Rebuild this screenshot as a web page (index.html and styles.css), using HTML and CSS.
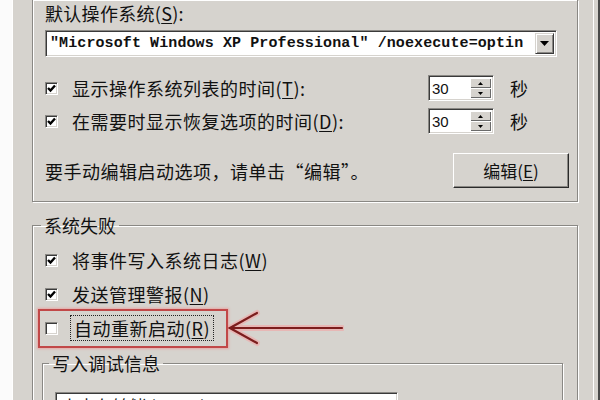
FILE: index.html
```html
<!DOCTYPE html>
<html lang="zh-CN">
<head>
    <meta charset="UTF-8">
    <title>启动和故障恢复</title>
    <link rel="stylesheet" href="styles.css">
</head>
<body>
    <div class="window">
        <div class="gutter"></div>

        <div class="tab">
            <!-- 系统启动 (top cut off) -->
            <div class="group group-boot">
                <div class="caption">默认操作系统(<u>S</u>):</div>

                <div class="combo combo-os">
                    <span class="combo-text">"Microsoft Windows XP Professional" /noexecute=optin</span>
                    <span class="combo-btn">
                        <svg width="9" height="5" viewBox="0 0 9 5"><path d="M0 0H9L4.5 5Z" fill="#000"/></svg>
                    </span>
                </div>

                <div class="row row-first">
                    <span class="check checked"><svg width="9" height="9" viewBox="0 0 9 9"><path d="M1 4L3.5 6.5L8 1.5" fill="none" stroke="#000" stroke-width="2.4"/></svg></span>
                    <span class="label">显示操作系统列表的时间(<u>T</u>):</span>
                    <span class="spin">
                        <span class="spin-text">30</span>
                        <span class="spin-btns">
                            <span class="spin-btn"><svg width="5" height="3" viewBox="0 0 5 3"><path d="M0 3H5L2.5 0Z" fill="#000"/></svg></span>
                            <span class="spin-btn"><svg width="5" height="3" viewBox="0 0 5 3"><path d="M0 0H5L2.5 3Z" fill="#000"/></svg></span>
                        </span>
                    </span>
                    <span class="unit">秒</span>
                </div>

                <div class="row row-second">
                    <span class="check checked"><svg width="9" height="9" viewBox="0 0 9 9"><path d="M1 4L3.5 6.5L8 1.5" fill="none" stroke="#000" stroke-width="2.4"/></svg></span>
                    <span class="label">在需要时显示恢复选项的时间(<u>D</u>):</span>
                    <span class="spin">
                        <span class="spin-text">30</span>
                        <span class="spin-btns">
                            <span class="spin-btn"><svg width="5" height="3" viewBox="0 0 5 3"><path d="M0 3H5L2.5 0Z" fill="#000"/></svg></span>
                            <span class="spin-btn"><svg width="5" height="3" viewBox="0 0 5 3"><path d="M0 0H5L2.5 3Z" fill="#000"/></svg></span>
                        </span>
                    </span>
                    <span class="unit">秒</span>
                </div>

                <div class="edit-row">
                    <span class="label">要手动编辑启动选项，请单击“编辑”。</span>
                    <span class="button">编辑(<u>E</u>)</span>
                </div>
            </div>

            <!-- 系统失败 -->
            <fieldset class="group group-fail">
                <legend>系统失败</legend>

                <div class="row row-event">
                    <span class="check checked"><svg width="9" height="9" viewBox="0 0 9 9"><path d="M1 4L3.5 6.5L8 1.5" fill="none" stroke="#000" stroke-width="2.4"/></svg></span>
                    <span class="label">将事件写入系统日志(<u>W</u>)</span>
                </div>

                <div class="row row-alert">
                    <span class="check checked"><svg width="9" height="9" viewBox="0 0 9 9"><path d="M1 4L3.5 6.5L8 1.5" fill="none" stroke="#000" stroke-width="2.4"/></svg></span>
                    <span class="label">发送管理警报(<u>N</u>)</span>
                </div>

                <div class="marked">
                    <div class="highlight">
                        <div class="row">
                            <span class="check"></span>
                            <span class="label focus">自动重新启动(<u>R</u>)</span>
                        </div>
                    </div>
                    <svg class="arrow" width="116" height="39" viewBox="0 0 116 39">
                        <g fill="none" stroke="#f3a6a6" stroke-width="6" stroke-linecap="round" opacity="0.6">
                            <path d="M2 19H114"/>
                            <path d="M29 4L2 19L29 34"/>
                        </g>
                        <g fill="none" stroke="#7c1d1d" stroke-width="2.2" stroke-linecap="round">
                            <path d="M2 19H114"/>
                            <path d="M29 4L2 19L29 34"/>
                        </g>
                    </svg>
                </div>

                <fieldset class="group group-debug">
                    <legend>写入调试信息</legend>
                    <div class="combo combo-dump">
                        <span class="dump-text">小内存转储 (64 KB)</span>
                    </div>
                </fieldset>
            </fieldset>
        </div>
    </div>
</body>
</html>
```

FILE: styles.css
```css
/* General */
body {
    margin: 0;
    width: 600px;
    height: 400px;
    overflow: hidden;
    background: #fbfbfb;
    font-family: "Noto Sans CJK SC", "Liberation Sans", sans-serif;
    font-size: 18px;
    color: #111;
}

u {
    text-underline-offset: 2px;
}

.window {
    display: flex;
    height: 400px;
    overflow: hidden;
}

.gutter {
    width: 12px;
    background: #fbfbfb;
}

/* Tab page */
.tab {
    flex: 1;
    background: #d6d3ce;
    padding: 0 22px 0 20px;
    box-shadow: inset -2px 0 0 #4a4a4a, inset -6px 0 0 #d6d3ce, inset -7px 0 0 #ffffff, inset 1px 0 0 #ffffff;
}

/* Group boxes (etched) */
.group {
    border: 1px solid #8a8884;
    box-shadow: inset 1px 1px 0 #fff, 1px 1px 0 #fff;
    min-width: 0;
}

.group-boot {
    border-top: none;
    padding: 3px 14px 13px 12px;
}

.group legend {
    line-height: 20px;
    padding: 0 3px;
}

.group-fail {
    margin: 13px 0 0 0;
    padding: 0 0 0 12px;
    height: 300px;
}

.group-fail > legend {
    margin-left: -4px;
}

.group-debug {
    margin: 5px 14px 0 -3px;
    padding: 0 0 0 12px;
    height: 120px;
}

.group-debug > legend {
    margin-left: -6px;
}

.caption {
    line-height: 20px;
    letter-spacing: 0.3px;
}

/* Combo boxes */
.combo {
    display: flex;
    align-items: center;
    height: 27px;
    box-sizing: border-box;
    background: #fff;
    border-top: 1px solid #8a8884;
    border-left: 1px solid #8a8884;
    border-bottom: 1px solid #fff;
    border-right: 1px solid #fff;
    box-shadow: inset 1px 1px 0 #3a3a3a, inset -1px -1px 0 #d6d3ce;
}

.combo-os {
    margin: 7px 6px 0 0;
    padding: 0 2px 0 4px;
}

.combo-text {
    flex: 1;
    font-family: "Liberation Mono", monospace;
    font-weight: bold;
    font-size: 15px;
    letter-spacing: 0.1px;
    white-space: nowrap;
    overflow: hidden;
}

.combo-btn {
    display: flex;
    align-items: center;
    justify-content: center;
    width: 19px;
    height: 21px;
    box-sizing: border-box;
    background: #d6d3ce;
    border-top: 1px solid #d6d3ce;
    border-left: 1px solid #d6d3ce;
    border-right: 1px solid #3a3a3a;
    border-bottom: 1px solid #3a3a3a;
    box-shadow: inset 1px 1px 0 #fff, inset -1px -1px 0 #8a8884;
}

.combo-dump {
    margin-top: 19px;
    width: 343px;
    align-items: flex-start;
    padding: 3px 0 0 5px;
}

.dump-text {
    font-size: 17px;
    line-height: 20px;
}

/* Check rows */
.row {
    display: flex;
    align-items: center;
    height: 26px;
}

.row-first { margin-top: 18px; }
.row-second { margin-top: 7px; }
.row-event { margin-top: 12px; }
.row-alert { margin-top: 8px; }

.check {
    display: flex;
    align-items: center;
    justify-content: center;
    width: 13px;
    height: 13px;
    box-sizing: border-box;
    margin-right: 14px;
    background: #fff;
    border-top: 1px solid #8a8884;
    border-left: 1px solid #8a8884;
    border-bottom: 1px solid #fff;
    border-right: 1px solid #fff;
    box-shadow: inset 1px 1px 0 #3a3a3a, inset -1px -1px 0 #d6d3ce;
}

.label {
    line-height: 22px;
    letter-spacing: 0.5px;
    white-space: nowrap;
}

.row .label {
    flex: 1;
}

/* Spin boxes */
.spin {
    display: flex;
    align-items: center;
    width: 66px;
    height: 26px;
    box-sizing: border-box;
    background: #fff;
    border-top: 1px solid #8a8884;
    border-left: 1px solid #8a8884;
    border-bottom: 1px solid #fff;
    border-right: 1px solid #fff;
    box-shadow: inset 1px 1px 0 #3a3a3a, inset -1px -1px 0 #d6d3ce;
    padding: 2px 2px 2px 3px;
}

.spin-text {
    flex: 1;
    font-family: "Liberation Sans", sans-serif;
    font-size: 15px;
}

.spin-btns {
    display: flex;
    flex-direction: column;
    width: 21px;
    height: 20px;
}

.spin-btn {
    flex: 1;
    display: flex;
    align-items: center;
    justify-content: center;
    background: #d6d3ce;
    box-shadow: inset 1px 1px 0 #fff, inset -1px -1px 0 #6a6a6a;
}

.unit {
    margin-left: 16px;
    width: 53px;
}

/* Edit row */
.edit-row {
    display: flex;
    align-items: center;
    justify-content: space-between;
    margin: 19px -6px 0 0;
    height: 35px;
}

.button {
    display: flex;
    align-items: center;
    justify-content: center;
    width: 116px;
    height: 35px;
    box-sizing: border-box;
    font-size: 17px;
    background: #d6d3ce;
    border-top: 1px solid #fff;
    border-left: 1px solid #fff;
    border-right: 1px solid #2a2a2a;
    border-bottom: 1px solid #2a2a2a;
    box-shadow: inset -1px -1px 0 #8a8884;
}

/* Annotation */
.marked {
    display: flex;
    margin: 2px 0 0 -7px;
}

.highlight {
    width: 190px;
    height: 39px;
    box-sizing: border-box;
    border: 2px solid #c14848;
    box-shadow: 0 0 2px 1px rgba(240, 150, 150, 0.7);
    padding: 4px 0 0 5px;
}

.focus {
    outline: 1px dotted #222;
    outline-offset: 1px;
    padding: 0 2px;
    flex: none !important;
}

.arrow {
    display: block;
}
```
